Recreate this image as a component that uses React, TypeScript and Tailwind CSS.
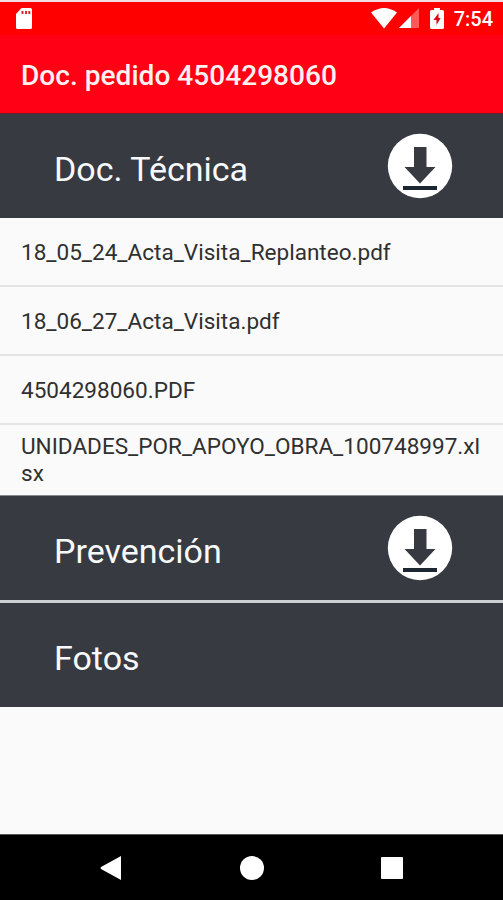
interface Section {
  title: string;
  files?: string[];
  downloadable?: boolean;
  className: string;
}

const sections: Section[] = [
  {
    title: 'Doc. Técnica',
    downloadable: true,
    className: 'h-[104px]',
    files: [
      '18_05_24_Acta_Visita_Replanteo.pdf',
      '18_06_27_Acta_Visita.pdf',
      '4504298060.PDF',
      'UNIDADES_POR_APOYO_OBRA_100748997.xlsx',
    ],
  },
  { title: 'Prevención', downloadable: true, className: 'h-[104px]' },
  { title: 'Fotos', className: 'h-[107px] border-t-[3px] border-[#cdd1d5]' },
];

const StatusBar = () => (
  <div className="flex h-[35px] shrink-0 items-center justify-between border-t-2 border-[#f1dede] bg-[#ff0000] pl-4 pr-[10px] text-white">
    <svg width="16" height="21" viewBox="0 0 16 21" className="-mt-px">
      <path d="M5.5 0H14.5Q16 0 16 1.5V19.5Q16 21 14.5 21H1.5Q0 21 0 19.5V6Z" fill="#fff" />
      <path d="M5.5 3H7.5V6H5.5ZM9 3H11V6H9ZM12.3 3H14.3V6H12.3Z" fill="#e02828" />
    </svg>
    <div className="-mt-px flex items-center">
      <svg width="26" height="21" viewBox="0 0 26 21">
        <path d="M0 4.5Q13-4.5 26 4.5L13 20.5Z" fill="#fff" />
      </svg>
      <svg width="20" height="20" viewBox="0 0 20 20" className="ml-[2px]">
        <path d="M0 20L20 0V20Z" fill="#fff" fillOpacity=".35" />
        <path d="M0 20L12 8V20Z" fill="#fff" />
      </svg>
      <svg width="14" height="21" viewBox="0 0 14 21" className="ml-[11px]">
        <path d="M4 0H10V2H12.5Q14 2 14 3.5V19.5Q14 21 12.5 21H1.5Q0 21 0 19.5V3.5Q0 2 1.5 2H4Z" fill="#fff" />
        <path d="M8.5 5L3.5 12H6.5V17L10.7 10H8.5Z" fill="#e00010" />
      </svg>
      <span className="ml-[10px] pt-px text-[20px] font-medium leading-none">7:54</span>
    </div>
  </div>
);

const DownloadIcon = () => (
  <svg width="66" height="66" viewBox="0 0 66 66" className="-mt-px">
    <circle cx="33" cy="33" r="32.2" fill="#fff" />
    <path d="M27 14H39.5V34H48.5L33 50.5L17.5 34H27Z" fill="#373b41" />
    <path d="M16 53H50V57H16Z" fill="#1d2731" />
  </svg>
);

const SectionHeader = ({ title, downloadable, className }: Section) => (
  <div className={`flex items-center justify-between bg-[#373b41] pl-[54px] pr-[50px] ${className}`}>
    <h2 className="pt-[5px] text-[34px] leading-none text-[#f7f9fb]">{title}</h2>
    {downloadable && <DownloadIcon />}
  </div>
);

const FileRow = ({ name }: { name: string }) => (
  <li className="flex min-h-[69px] items-center border-b-2 border-[#e4e4e4] px-[21px] pt-[2px] text-[22.55px] leading-[27px] text-[#303030] last:h-[71px] last:border-b last:border-[#85898c] last:pt-0">
    <span className="break-all">{name}</span>
  </li>
);

const NavBar = () => (
  <nav className="flex h-[66px] shrink-0 items-center justify-between border-t border-[#555] bg-black pl-[100px] pr-[100px]">
    <svg width="22" height="24" viewBox="0 0 22 24">
      <path d="M21 0V24L1 13Q0 12 1 11Z" fill="#fff" />
    </svg>
    <div className="size-6 rounded-full bg-white" />
    <div className="size-[22px] rounded-[1px] bg-white" />
  </nav>
);

export default function App() {
  return (
    <div className="flex h-[900px] w-[503px] flex-col overflow-hidden bg-[#fafafa] font-['Roboto',sans-serif]">
      <StatusBar />
      <header className="flex h-[79px] shrink-0 items-center border-b border-[#6d1d2b] bg-[#ff0014] px-[21px] pt-[4px]">
        <h1 className="text-[28.1px] font-medium leading-none text-[#fff0f2]">Doc. pedido 4504298060</h1>
      </header>
      <main className="grow">
        {sections.map((section) => (
          <section key={section.title}>
            <SectionHeader {...section} />
            {section.files && (
              <ul>
                {section.files.map((file) => (
                  <FileRow key={file} name={file} />
                ))}
              </ul>
            )}
          </section>
        ))}
      </main>
      <NavBar />
    </div>
  );
}
